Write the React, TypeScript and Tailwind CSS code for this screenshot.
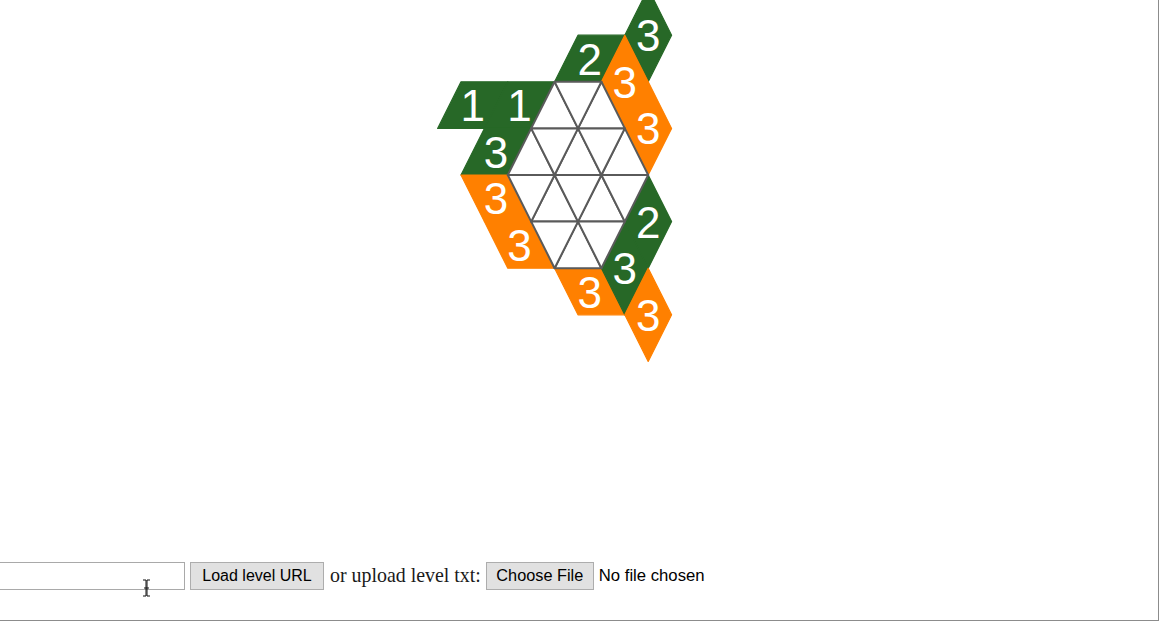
const GREEN = '#276827'
const ORANGE = '#ff8000'

// lattice: a = half-side steps horizontally, j = rows
const px = (a: number) => 578 + a * 23.4
const py = (j: number) => 175 + j * 46.6

type Pt = [number, number]
type Clue = { pts: Pt[]; color: string; n: number }

const clues: Clue[] = [
  { pts: [[-6, -1], [-5, -2], [-3, -2], [-4, -1]], color: GREEN, n: 1 },
  { pts: [[-4, -1], [-3, -2], [-1, -2], [-2, -1]], color: GREEN, n: 1 },
  { pts: [[-5, 0], [-4, -1], [-2, -1], [-3, 0]], color: GREEN, n: 3 },
  { pts: [[-1, -2], [0, -3], [2, -3], [1, -2]], color: GREEN, n: 2 },
  { pts: [[3, -4], [4, -3], [3, -2], [2, -3]], color: GREEN, n: 3 },
  { pts: [[2, -3], [3, -2], [2, -1], [1, -2]], color: ORANGE, n: 3 },
  { pts: [[3, -2], [4, -1], [3, 0], [2, -1]], color: ORANGE, n: 3 },
  { pts: [[-5, 0], [-3, 0], [-2, 1], [-4, 1]], color: ORANGE, n: 3 },
  { pts: [[-4, 1], [-2, 1], [-1, 2], [-3, 2]], color: ORANGE, n: 3 },
  { pts: [[-1, 2], [1, 2], [2, 3], [0, 3]], color: ORANGE, n: 3 },
  { pts: [[3, 0], [4, 1], [3, 2], [2, 1]], color: GREEN, n: 2 },
  { pts: [[2, 1], [3, 2], [2, 3], [1, 2]], color: GREEN, n: 3 },
  { pts: [[3, 2], [4, 3], [3, 4], [2, 3]], color: ORANGE, n: 3 },
]

const inHex = (p: Pt) => Math.abs(p[0]) + Math.abs(p[1]) <= 3

function hexTriangles() {
  const tris: Pt[][] = []
  for (let j = -2; j <= 1; j++) {
    for (let a = -4; a <= 4; a++) {
      if ((a + j) % 2 === 0) continue
      const up: Pt[] = [[a, j], [a - 1, j + 1], [a + 1, j + 1]]
      if (up.every(inHex)) tris.push(up)
    }
    for (let a = -4; a <= 4; a++) {
      if (Math.abs(a + j) % 2 === 1) continue
      const down: Pt[] = [[a - 1, j], [a + 1, j], [a, j + 1]]
      if (down.every(inHex)) tris.push(down)
    }
  }
  return tris
}

const toPoints = (pts: Pt[]) => pts.map(([a, j]) => `${px(a)},${py(j)}`).join(' ')

function Board() {
  const tris = hexTriangles()
  return (
    <svg width="1157" height="370" className="block">
      {/* clue tiles first, then the digits so seams never cut through */}
      {clues.map((c, i) => (
        <polygon key={i} points={toPoints(c.pts)} fill={c.color} stroke={c.color} strokeWidth={1.2} strokeLinejoin="round" />
      ))}
      {clues.map((c, i) => {
        const cx = c.pts.reduce((s, p) => s + px(p[0]), 0) / 4
        const cy = c.pts.reduce((s, p) => s + py(p[1]), 0) / 4
        return (
          <text
            key={i}
            x={cx}
            y={cy + 16}
            textAnchor="middle"
            fill="#fff"
            fontSize={44}
            fontFamily="'Liberation Sans', Arial, sans-serif"
          >
            {c.n}
          </text>
        )
      })}
      {tris.map((t, i) => (
        <polygon key={i} points={toPoints(t)} fill="#fff" stroke="#5a5a5a" strokeWidth={2} strokeLinejoin="round" />
      ))}
    </svg>
  )
}

export default function App() {
  return (
    <div className="relative flex h-[621px] w-[1159px] flex-col overflow-hidden border-r border-b border-[#8c8c8c] bg-white">
      <Board />

      {/* level loader */}
      <div className="mt-[192px] flex h-[28px] items-center font-['Liberation_Sans',Arial,sans-serif] text-[16px] text-black">
        <input
          type="text"
          className="-ml-[6px] h-[28px] w-[191px] border border-[#a9a9a9] bg-white px-1 outline-none"
        />
        <button className="ml-[5px] h-[28px] w-[134px] border border-[#adadad] bg-[#e1e1e1] leading-none">
          Load level URL
        </button>
        <span className="ml-[6px] font-['Liberation_Serif','Times_New_Roman',serif] text-[19.9px] text-[#1a1a1a]">
          or upload level txt:
        </span>
        <button className="ml-[5px] h-[28px] w-[108px] border border-[#adadad] bg-[#e1e1e1] pb-[2px] text-[16.3px] leading-none">
          Choose File
        </button>
        <span className="ml-[5px] text-[16.7px]">No file chosen</span>
      </div>

      {/* mouse cursor */}
      <svg className="absolute top-[579px] left-[142px]" width="9" height="18" viewBox="0 0 9 18">
        <path d="M1 1h3v16H1M8 1H5v16h3M2 9h5" fill="none" stroke="#111" strokeWidth="1" />
      </svg>
    </div>
  )
}
